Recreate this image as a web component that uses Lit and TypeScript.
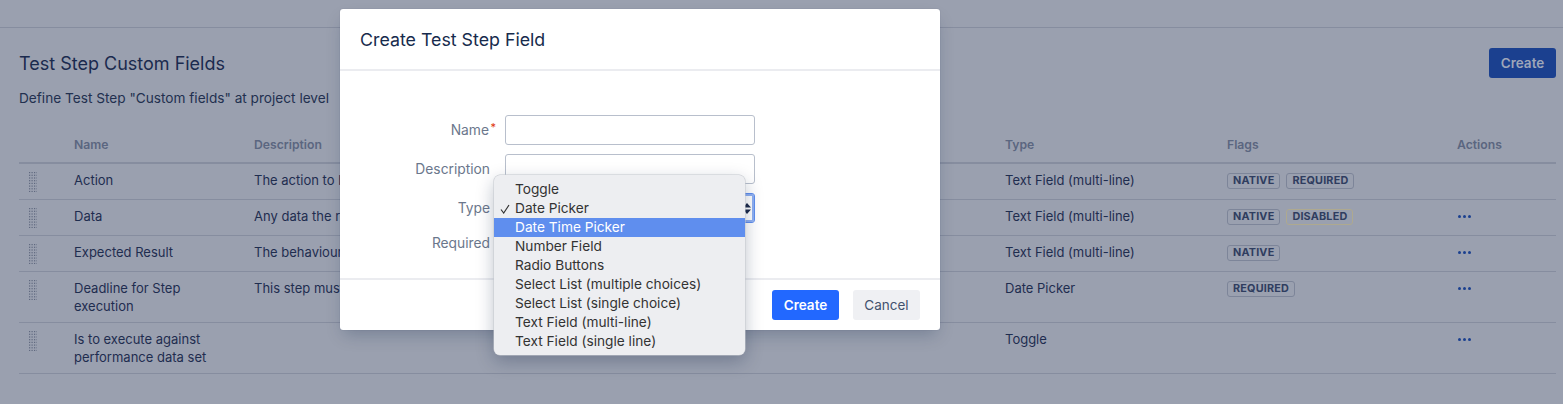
import { LitElement, html, css, nothing, svg } from "lit";
import { customElement } from "lit/decorators.js";

type Row = { name: string; desc: string; type: string; flags: string[]; actions: boolean };

const rows: Row[] = [
  { name: "Action", desc: "The action to be performed", type: "Text Field (multi-line)", flags: ["NATIVE", "REQUIRED"], actions: false },
  { name: "Data", desc: "Any data the required", type: "Text Field (multi-line)", flags: ["NATIVE", "DISABLED"], actions: true },
  { name: "Expected Result", desc: "The behaviour expected", type: "Text Field (multi-line)", flags: ["NATIVE"], actions: true },
  { name: "Deadline for Step execution", desc: "This step must be executed", type: "Date Picker", flags: ["REQUIRED"], actions: true },
  { name: "Is to execute against performance data set", desc: "", type: "Toggle", flags: [], actions: true },
];

const options = [
  "Toggle",
  "Date Picker",
  "Date Time Picker",
  "Number Field",
  "Radio Buttons",
  "Select List (multiple choices)",
  "Select List (single choice)",
  "Text Field (multi-line)",
  "Text Field (single line)",
];

const dots: { x: number; y: number }[] = [];
for (let c = 0; c < 4; c++) for (let r = 0; r < 8; r++) dots.push({ x: c * 2.5, y: r * 2.7 });

@customElement("app-root")
export class AppRoot extends LitElement {
  static styles = css`
    :host {
      display: block;
      position: relative;
      width: 1563px;
      height: 404px;
      overflow: hidden;
      background: #9aa0af;
      font-family: Inter, "Liberation Sans", sans-serif;
      font-size: 13px;
      line-height: 18px;
      color: #1f2d4f;
    }
    .topbar {
      height: 27px;
      border-bottom: 1px solid #868d9f;
    }
    .page {
      padding: 20px 7px 0 19px;
    }
    .head {
      display: flex;
      justify-content: space-between;
      align-items: center;
    }
    h1 {
      margin: 0;
      padding-top: 2px;
      font-size: 18px;
      line-height: 28px;
      font-weight: 400;
      color: #1a2a4e;
    }
    .primary-dim {
      width: 67px;
      height: 30px;
      border: 0;
      border-radius: 3px;
      background: #1b408f;
      color: #9ea6b9;
      font: 600 13.5px Inter, sans-serif;
      padding: 0;
    }
    .sub {
      margin: 11px 0 28px;
      font-size: 13.65px;
      color: #22304f;
    }
    table {
      width: 100%;
      table-layout: fixed;
      border-collapse: separate;
      border-spacing: 0;
    }
    th {
      text-align: left;
      font-size: 12.2px;
      font-weight: 600;
      color: #5b6680;
      padding: 1px 0 8px;
      border-bottom: 2px solid #868d9f;
    }
    td {
      box-sizing: border-box;
      height: 36px;
      padding: 7px 10px 7px 0;
      vertical-align: top;
      border-bottom: 1px solid #868d9f;
    }
    td.name {
      padding-right: 30px;
    }
    .handle {
      display: block;
      margin: 1px 0 0 10px;
    }
    .flags {
      display: flex;
      gap: 6px;
      margin-top: 2px;
    }
    .loz {
      box-sizing: border-box;
      height: 16px;
      padding: 0 5px;
      border: 1px solid #7d8599;
      border-radius: 3px;
      font-size: 10.8px;
      line-height: 14px;
      font-weight: 700;
      letter-spacing: 0.2px;
      color: #2f3d5f;
    }
    .loz.warn {
      border-color: #aea98f;
    }
    .more {
      display: flex;
      gap: 2px;
      padding: 8px 0 0 1px;
    }
    .more i {
      width: 3px;
      height: 3px;
      border-radius: 50%;
      background: #1b408f;
    }

    .modal {
      position: absolute;
      left: 340px;
      top: 9px;
      width: 600px;
      height: 321px;
      box-sizing: border-box;
      display: flex;
      flex-direction: column;
      background: #fff;
      border-radius: 3px;
      box-shadow: 0 8px 16px -4px rgba(9, 30, 66, 0.25), 0 0 1px rgba(9, 30, 66, 0.31);
      color: #172b4d;
    }
    .m-head {
      height: 62px;
      flex: none;
      box-sizing: border-box;
      padding: 16px 20px 0;
      border-bottom: 2px solid #ebecf0;
    }
    h2 {
      margin: 0;
      font-size: 17.8px;
      line-height: 30px;
      font-weight: 400;
      color: #172b4d;
    }
    .form {
      flex: 1;
      padding-top: 44px;
      display: grid;
      grid-template-columns: 150px 250px;
      grid-template-rows: 30px 30px 30px 22px;
      column-gap: 15px;
      row-gap: 9px;
      align-items: center;
      align-content: start;
    }
    label {
      text-align: right;
      color: #6b778c;
      font-size: 13.8px;
      position: relative;
    }
    .name-l {
      padding-right: 1px;
    }
    .star {
      position: absolute;
      right: -6px;
      top: -3px;
      color: #de350b;
      font-size: 11px;
    }
    input {
      box-sizing: border-box;
      width: 250px;
      height: 30px;
      border: 1px solid #b8bfcc;
      border-radius: 3px;
      background: #fff;
      margin: 0;
      padding: 0;
      display: block;
    }
    .select {
      position: relative;
      box-sizing: border-box;
      width: 250px;
      height: 30px;
      border-radius: 3px;
      border: 1px solid #5f8eee;
      box-shadow: inset 0 0 0 2px #8fb0f3;
      background: #fff;
    }
    .arrows {
      position: absolute;
      right: 3px;
      top: 9px;
    }
    .popup {
      position: absolute;
      left: -12px;
      top: -19px;
      width: 251px;
      height: 180px;
      box-sizing: border-box;
      padding: 5px 0;
      background: #edeef1;
      border-radius: 6px;
      box-shadow: 0 0 0 0.5px #c4c7cd, 0 6px 18px rgba(9, 30, 66, 0.28);
      z-index: 1;
    }
    .opt {
      position: relative;
      height: 19px;
      line-height: 19px;
      padding-left: 21px;
      font-size: 13.7px;
      color: #333;
    }
    .opt.hi {
      background: #5f8eee;
      color: #fff;
    }
    .check {
      position: absolute;
      left: 6px;
      top: 5px;
    }
    .m-foot {
      height: 52px;
      flex: none;
      box-sizing: border-box;
      border-top: 2px solid #ebecf0;
      padding: 10px 20px 0 0;
      display: flex;
      justify-content: flex-end;
      gap: 14px;
    }
    .btn {
      width: 67px;
      height: 30px;
      border: 0;
      border-radius: 3px;
      padding: 0;
      font: 400 13.5px Inter, sans-serif;
    }
    .btn.create {
      background: #2268ff;
      color: #fff;
      font-weight: 600;
    }
    .btn.cancel {
      background: #eff0f3;
      color: #42526e;
    }
  `;

  private flag(f: string) {
    return html`<span class="loz ${f === "DISABLED" ? "warn" : ""}">${f}</span>`;
  }

  render() {
    return html`
      <div class="topbar"></div>
      <div class="page">
        <div class="head">
          <h1>Test Step Custom Fields</h1>
          <button class="primary-dim">Create</button>
        </div>
        <div class="sub">Define Test Step "Custom fields" at project level</div>
        <table>
          <colgroup>
            <col style="width:55px" /><col style="width:180px" /><col style="width:751px" />
            <col style="width:222px" /><col style="width:230px" /><col />
          </colgroup>
          <thead>
            <tr><th></th><th>Name</th><th>Description</th><th>Type</th><th>Flags</th><th>Actions</th></tr>
          </thead>
          <tbody>
            ${rows.map(
              (r) => html`<tr>
                <td>
                  <svg class="handle" width="8" height="20" viewBox="0 0 8 20">
                    ${dots.map((d) => svg`<rect x=${d.x} y=${d.y} width="1.2" height="1.2" fill="#5f687f" />`)}
                  </svg>
                </td>
                <td class="name">${r.name}</td>
                <td>${r.desc}</td>
                <td>${r.type}</td>
                <td><div class="flags">${r.flags.map((f) => this.flag(f))}</div></td>
                <td>${r.actions ? html`<div class="more"><i></i><i></i><i></i></div>` : nothing}</td>
              </tr>`
            )}
          </tbody>
        </table>
      </div>

      <div class="modal">
        <div class="m-head"><h2>Create Test Step Field</h2></div>
        <div class="form">
          <label class="name-l">Name<span class="star">*</span></label>
          <input type="text" />
          <label>Description</label>
          <input type="text" />
          <label>Type</label>
          <div class="select">
            <svg class="arrows" width="8" height="11" viewBox="0 0 8 11">
              <path d="M4 0 L8 4.4 H0 Z M0 6.6 H8 L4 11 Z" fill="#1d2b4a" />
            </svg>
            <div class="popup">
              ${options.map(
                (o, i) => html`<div class="opt ${i === 2 ? "hi" : ""}">
                  ${i === 1
                    ? html`<svg class="check" width="10" height="10" viewBox="0 0 10 10">
                        <path d="M1 5.5 L3.7 9 L9 1" fill="none" stroke="#333" stroke-width="1.2" />
                      </svg>`
                    : nothing}${o}
                </div>`
              )}
            </div>
          </div>
          <label>Required</label>
          <div></div>
        </div>
        <div class="m-foot">
          <button class="btn create">Create</button>
          <button class="btn cancel">Cancel</button>
        </div>
      </div>
    `;
  }
}
